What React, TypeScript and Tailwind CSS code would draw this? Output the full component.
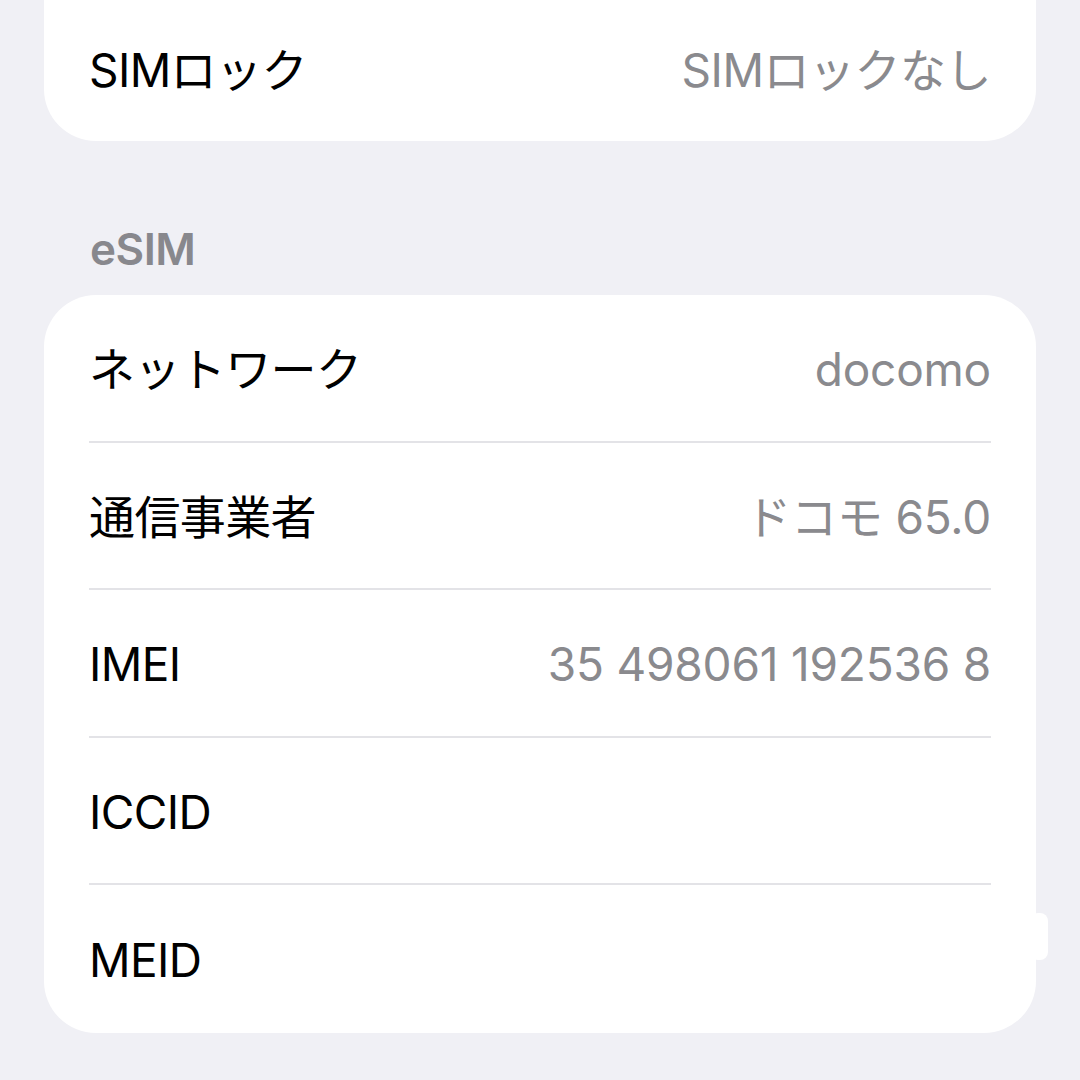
const font = { fontFamily: 'Inter, "Noto Sans CJK JP", sans-serif' };

type Row = { label: string; value: string };

const esimRows: Row[] = [
  { label: 'ネットワーク', value: 'docomo' },
  { label: '通信事業者', value: 'ドコモ 65.0' },
  { label: 'IMEI', value: '35 498061 192536 8' },
  { label: 'ICCID', value: '' },
  { label: 'MEID', value: '' },
];

function InfoRow({ label, value, last }: Row & { last?: boolean }) {
  return (
    <div className={`flex h-[147.5px] items-center justify-between pt-[3px] ${last ? '' : 'border-b-2 border-[#e3e3e7]'}`}>
      <span className="text-[46px] leading-none text-black tracking-[-0.6px]">{label}</span>
      <span className="text-[46px] leading-none text-[#8a8a8e] tracking-[-0.2px]">{value}</span>
    </div>
  );
}

export default function App() {
  return (
    <div className="relative w-[1080px] h-[1080px] overflow-hidden bg-[#f0f0f5]" style={font}>
      {/* SIM lock card, top cut off */}
      <div className="mx-[44px] -mt-[8px] rounded-b-[52px] bg-white">
        <div className="mx-[45px]">
          <div className="flex h-[149px] items-center justify-between pt-[6px]">
            <span className="text-[46px] leading-none text-black tracking-[-0.6px]">SIMロック</span>
            <span className="text-[46px] leading-none text-[#8a8a8e] tracking-[-0.5px]">SIMロックなし</span>
          </div>
        </div>
      </div>

      {/* eSIM section */}
      <div className="px-[90px] pt-[86px] pb-[24px]">
        <span className="text-[44px] font-semibold leading-none text-[#88888d] tracking-[-0.5px]">eSIM</span>
      </div>
      <div className="mx-[44px] rounded-[52px] bg-white">
        <div className="mx-[45px]">
          {esimRows.map((r, i) => (
            <InfoRow key={r.label} {...r} last={i === esimRows.length - 1} />
          ))}
        </div>
      </div>

      {/* small white tab poking out of the card edge */}
      <div className="absolute left-[1030px] top-[913px] h-[47px] w-[18px] rounded-[8px] bg-white" />
    </div>
  );
}
